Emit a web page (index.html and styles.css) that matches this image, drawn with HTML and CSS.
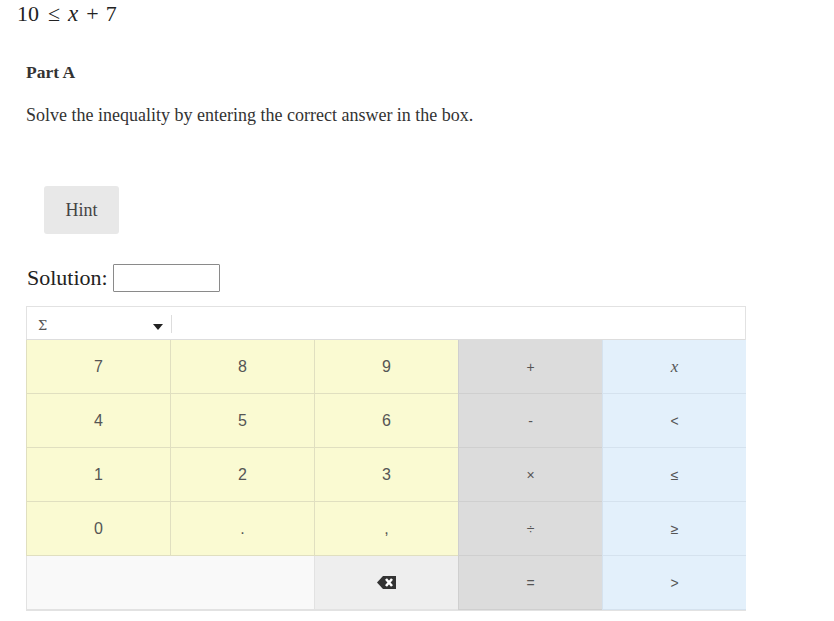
FILE: index.html
```html
<!DOCTYPE html>
<html>
<head>
<meta charset="utf-8">
<link rel="stylesheet" href="styles.css">
</head>
<body>
<div class="math"><span>10</span><span class="mrel">≤</span><i class="mvar">x</i><span class="mbin">+</span><span>7</span></div>
<div class="content">
  <div class="part">Part A</div>
  <p class="prompt">Solve the inequality by entering the correct answer in the box.</p>
  <button class="hint">Hint</button>
  <div class="solution">
    <label>Solution:</label>
    <span class="answer"></span>
  </div>
  <div class="keyboard">
    <div class="toolbar">
      <div class="picker"><span class="sigma">Σ</span><span class="caret"></span></div>
      <div class="divider"></div>
    </div>
    <div class="keys">
      <div class="key num">7</div><div class="key num">8</div><div class="key num">9</div><div class="key op">+</div><div class="key rel"><i>x</i></div>
      <div class="key num">4</div><div class="key num">5</div><div class="key num">6</div><div class="key op">-</div><div class="key rel">&lt;</div>
      <div class="key num">1</div><div class="key num">2</div><div class="key num">3</div><div class="key op">×</div><div class="key rel">≤</div>
      <div class="key num">0</div><div class="key num">.</div><div class="key num">,</div><div class="key op">÷</div><div class="key rel">≥</div>
      <div class="key blank"></div><div class="key back"><svg width="19" height="13" viewBox="0 0 19 13"><path d="M6 0H19V13H6L0 6.5Z" fill="#333"/><path d="M9 3L15 10M15 3L9 10" stroke="#fff" stroke-width="2.6"/></svg></div><div class="key op">=</div><div class="key rel">&gt;</div>
    </div>
  </div>
</div>
</body>
</html>
```
FILE: styles.css
```css
html, body { margin: 0; padding: 0; background: #fff; }
body { font-family: "Liberation Serif", serif; color: #333; }
.math { font-family: "Liberation Serif", serif; font-size: 22px; padding: 1px 0 0 17px; height: 26px; line-height: 26px; color: #222; display: flex; align-items: baseline; }
.math .mrel { margin: 0 8px 0 9px; }
.math .mbin { margin: 0 7px 0 8px; }
.math .mvar { font-style: italic; font-size: 23px; }
.content { padding-left: 26px; }
.part { font-weight: bold; font-size: 17.5px; margin-top: 35px; line-height: 20px; color: #333; }
.prompt { font-size: 18px; margin: 23px 0 0; line-height: 20px; color: #333; }
.hint { display: block; margin: 61px 0 0 18px; width: 75px; height: 48px; border: none; border-radius: 3px; background: #e8e8e8; font-family: "Liberation Serif", serif; font-size: 18px; color: #444; padding: 0; }
.solution { display: flex; align-items: center; margin-top: 29px; height: 30px; }
.solution label { font-size: 22px; color: #222; margin-left: 1px; }
.answer { display: inline-block; width: 105px; height: 26px; border: 1px solid #8a8a8a; margin-left: 5px; border-radius: 1px; }
.keyboard { margin-top: 13px; width: 718px; border: 1px solid #e2e2e2; }
.toolbar { display: flex; align-items: center; height: 32px; background: #fff; }
.picker { width: 138px; height: 32px; margin-left: 3px; display: flex; align-items: center; justify-content: space-between; padding: 6px 5px 0 8px; box-sizing: border-box; border-bottom: 1px solid #fff; }
.sigma { font-size: 13px; color: #555; font-family: "DejaVu Serif", serif; }
.caret { width: 0; height: 0; border-left: 5px solid transparent; border-right: 5px solid transparent; border-top: 6px solid #222; margin-top: 2px; }
.divider { width: 1px; height: 18px; background: #ddd; margin-left: 3px; margin-top: 2px; }
.keys { display: grid; grid-template-columns: repeat(5, 144px); grid-auto-rows: 54px; border-top: 1px solid #ddd; margin-left: -1px; }
.key { display: flex; align-items: center; justify-content: center; font-family: "Liberation Sans", Arial, sans-serif; font-size: 15px; color: #555; border-left: 1px solid #ddd; border-bottom: 1px solid #ddd; box-sizing: border-box; }
.key.num { background: #fafad2; border-color: #e0dfc0; font-size: 16px; }
.key.op { background: #dcdcdc; border-color: #cfcfcf; font-size: 14px; }
.key.rel { background: #e3f0fb; border-color: #d5e2ee; font-size: 14px; }
.key.rel i { font-family: "Liberation Serif", serif; font-size: 17px; }
.key.blank { grid-column: span 2; background: #f9f9f9; border-color: #e2e2e2; }
.key.back { background: #eeeeee; border-color: #e2e2e2; }
```
